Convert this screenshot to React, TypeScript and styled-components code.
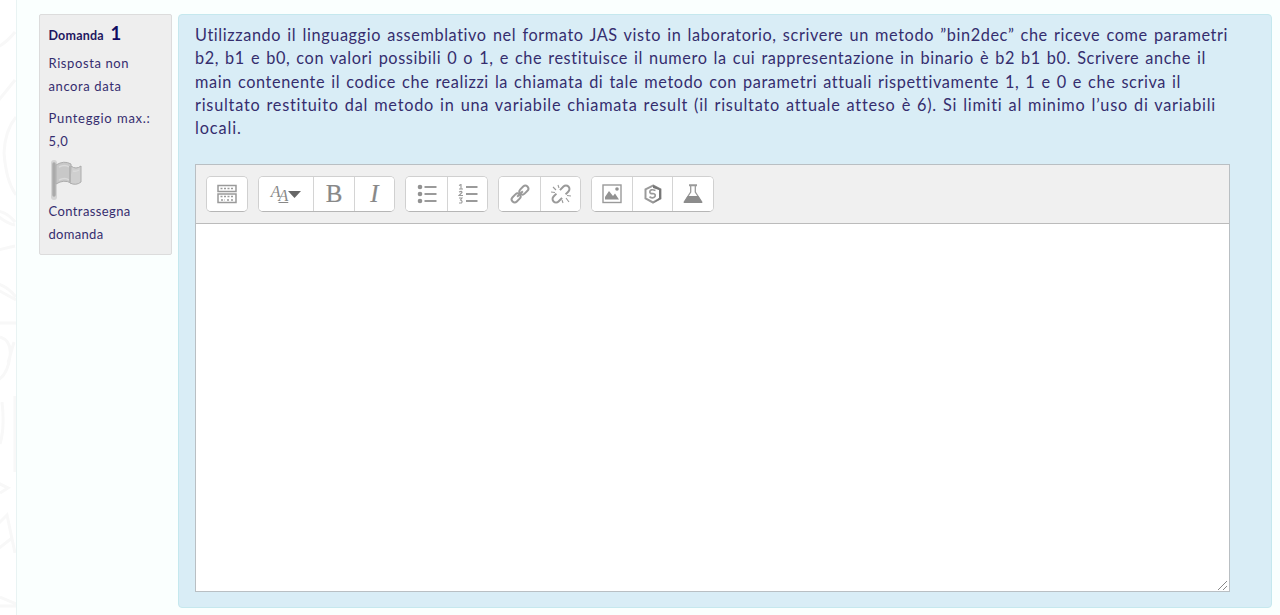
import React from 'react';
import styled, { createGlobalStyle } from 'styled-components';

const GlobalStyle = createGlobalStyle`
  * { box-sizing: border-box; }
  body { margin: 0; background: #fff; font-family: Lato, "Open Sans", sans-serif; color: #352d6e; overflow: hidden; }
  p, h3 { margin: 0; }
`;

const Page = styled.div`
  display: flex;
  height: 615px;
  overflow: hidden;
`;

const Margin = styled.aside`
  flex: 0 0 17px;
  overflow: hidden;
  border-right: 1px solid #e9f3f3;
`;

const Content = styled.main`
  flex: 1;
  display: flex;
  align-items: flex-start;
  gap: 6px;
  padding: 14px 8px 0 22px;
  background: #fafffe;
`;

const InfoBox = styled.section`
  flex: 0 0 133px;
  height: 241px;
  padding: 7px 8px 0 8.5px;
  background: #eee;
  border: 1px solid #dcdcdc;
  border-radius: 2px;
  font-size: 13px;
  line-height: 23.3px;
`;

const Title = styled.h3`
  display: flex;
  align-items: baseline;
  gap: 7px;
  height: 24px;
  font-size: 12.5px;
  line-height: 22px;
  color: #1f1760;
`;

const Number = styled.span`
  font-size: 18.5px;
  color: #100b60;
`;

const InfoText = styled.p<{ $top?: number }>`
  margin-top: ${(p) => p.$top ?? 0}px;
`;

const Line = styled.span<{ $width: number; $spacing?: number }>`
  display: block;
  width: ${(p) => p.$width}px;
  white-space: nowrap;
  text-align-last: justify;
  letter-spacing: ${(p) => p.$spacing ?? 0.6}px;
`;

const Flag = styled.svg`
  display: block;
  width: 36px;
  height: 40px;
  margin: 7px 0 0 1px;
`;

const Question = styled.section`
  flex: 1;
  height: 594px;
  padding: 8px 17px 0 16px;
  background: #d9edf6;
  border: 1px solid #c5e8ee;
  border-radius: 4px;
`;

const Prompt = styled.p`
  height: 117px;
  font-size: 16.3px;
  line-height: 23.3px;
`;

const Editor = styled.div`
  display: flex;
  flex-direction: column;
  width: 1035px;
  height: 428px;
  margin-top: 24px;
  border: 1px solid #b9bfc3;
  background: #fff;
`;

const Toolbar = styled.div`
  display: flex;
  align-items: flex-start;
  gap: 10px;
  height: 59px;
  padding: 11px 10px;
  background: #f0f0f0;
  border-bottom: 1px solid #bbb;
`;

const Group = styled.div`
  display: flex;
  height: 36px;
  background: #fff;
  border: 1px solid #d0d0d0;
  border-bottom-color: #b6b6b6;
  border-radius: 5px;
  overflow: hidden;
`;

const Tool = styled.button<{ $width?: number }>`
  display: flex;
  align-items: center;
  justify-content: center;
  width: ${(p) => p.$width ?? 41}px;
  height: 34px;
  padding: 0;
  border: 0;
  background: #fff;
  & + & { border-left: 1px solid #d4d4d4; }
`;

const Glyph = styled.span<{ $italic?: boolean }>`
  font: ${(p) => (p.$italic ? 'italic' : 'normal')} 25px/32px "Liberation Serif", serif;
  color: #888;
  -webkit-text-stroke: 0.2px #888;
`;

const FontMark = styled.span`
  display: flex;
  align-items: center;
  font: italic 16px/18px "Liberation Serif", serif;
  color: #888;
`;

const Small = styled.span<{ $down?: boolean }>`
  margin-top: ${(p) => (p.$down ? 4 : -4)}px;
  margin-left: ${(p) => (p.$down ? -2 : 0)}px;
  text-decoration: ${(p) => (p.$down ? 'underline' : 'none')};
`;

const Area = styled.div`
  flex: 1;
  display: flex;
  align-items: flex-end;
  justify-content: flex-end;
`;

const Icon = ({ children }: { children: React.ReactNode }) => (
  <svg width="20" height="20" viewBox="0 0 20 20" fill="none" stroke="#9a9a9a" strokeWidth="1.5">{children}</svg>
);

const Doodles = () => (
  <svg width="16" height="615" fill="none" stroke="#f8f8f8" strokeWidth="3">
    <path d="M-2 47Q7 42 15 32M-2 101L15 80M16 117Q5 130 4 153Q6 181 16 195M-2 211Q8 213 15 222M-2 216Q8 224 15 225M-2 250L15 246M-2 284Q7 286 16 297M-2 290L16 300M0 323H16M0 337Q12 341 10 356Q8 374 -2 380M14 342L8 363M2 402Q5 428 0 444M15 396V472M-2 483L8 488L0 493M-2 524L7 515L15 553M-2 549L12 538M0 597L16 604M0 606H16" />
  </svg>
);

const App = () => (
  <>
    <GlobalStyle />
    <Page>
      <Margin><Doodles /></Margin>
      <Content>
        <InfoBox>
          <Title><Line $width={55} $spacing={0.2}>Domanda</Line><Number>1</Number></Title>
          <InfoText $top={6}>
            <Line $width={78}>Risposta non</Line>
            <Line $width={73}>ancora data</Line>
          </InfoText>
          <InfoText $top={8}>
            <Line $width={102} $spacing={0.7}>Punteggio max.:</Line>
            <Line $width={22}>5,0</Line>
          </InfoText>
          <Flag viewBox="0 0 36 40">
            <path d="M4 3V37" stroke="#d4d4d4" strokeWidth="6" strokeLinecap="round" />
            <path d="M4 4V35" stroke="#aaa" strokeWidth="3.4" strokeLinecap="round" />
            <path d="M6 5Q14 0 21 4V23Q14 19 6 24Z" fill="#c8c8c8" stroke="#adadad" />
            <path d="M21 6Q26 10 31 6V22Q26 26 20 23Z" fill="#cfcfcf" stroke="#acacac" />
            <path d="M9 7Q15 4 19 7M9 20Q15 17 19 20M23 11Q26 12 29 10" stroke="#dadada" strokeWidth="1.5" fill="none" />
            <path d="M20 6V22" stroke="#b4b4b4" strokeWidth="2" />
          </Flag>
          <InfoText>
            <Line $width={82} $spacing={0.4}>Contrassegna</Line>
            <Line $width={55} $spacing={0.3}>domanda</Line>
          </InfoText>
        </InfoBox>
        <Question>
          <Prompt>
            <Line $width={1033}>Utilizzando il linguaggio assemblativo nel formato JAS visto in laboratorio, scrivere un metodo ”bin2dec” che riceve come parametri</Line>
            <Line $width={1011}>b2, b1 e b0, con valori possibili 0 o 1, e che restituisce il numero la cui rappresentazione in binario è b2 b1 b0. Scrivere anche il</Line>
            <Line $width={986}>main contenente il codice che realizzi la chiamata di tale metodo con parametri attuali rispettivamente 1, 1 e 0 e che scriva il</Line>
            <Line $width={1021} $spacing={0.75}>risultato restituito dal metodo in una variabile chiamata result (il risultato attuale atteso è 6). Si limiti al minimo l’uso di variabili</Line>
            <Line $width={49} $spacing={0.9}>locali.</Line>
          </Prompt>
          <Editor>
            <Toolbar>
              <Group>
                <Tool $width={40}>
                  <Icon>
                    <path d="M1 1.5H19V7.5H1ZM1 10H19V18.5H1Z" />
                    <path d="M3.5 4.5H17M3.5 12.5H17M4 16H8M10 16H12M14 16H16" strokeDasharray="2 1.5" />
                  </Icon>
                </Tool>
              </Group>
              <Group>
                <Tool $width={54}>
                  <FontMark>
                    <Small>A</Small><Small $down>A</Small>
                    <svg width="13" height="8" viewBox="0 0 13 8"><path d="M0 1H13L6.5 8Z" fill="#666" /></svg>
                  </FontMark>
                </Tool>
                <Tool><Glyph>B</Glyph></Tool>
                <Tool $width={40}><Glyph $italic>I</Glyph></Tool>
              </Group>
              <Group>
                <Tool>
                  <Icon>
                    <path d="M7.5 3H19.5M7.5 10H19.5M7.5 17H19.5" strokeWidth="2" />
                    <g fill="#929292" stroke="none"><circle cx="3" cy="3" r="2.3" /><circle cx="3" cy="10" r="2.3" /><circle cx="3" cy="17" r="2.3" /></g>
                  </Icon>
                </Tool>
                <Tool $width={40}>
                  <Icon>
                    <path d="M8 3H19.5M8 10H19.5M8 17H19.5" strokeWidth="2" />
                    <path d="M1 1.5L3 .5V5M1 5H5M1 8Q4 6.5 4 8.5L1 11.5H5M1 14H4L2.5 16Q5 17 3.5 19H1" strokeWidth="1.1" />
                  </Icon>
                </Tool>
              </Group>
              <Group>
                <Tool>
                  <Icon>
                    <g transform="rotate(-45 10 10)" strokeWidth="2"><rect x="-.5" y="7" width="10" height="6" rx="3" /><rect x="10.5" y="7" width="10" height="6" rx="3" /><path d="M6 10H14" /></g>
                  </Icon>
                </Tool>
                <Tool $width={40}>
                  <Icon>
                    <g transform="rotate(-45 10 10)" strokeWidth="2"><path d="M7 6.5H3A3.5 3.5 0 0 0 3 13.5H8M12 6.5H17A3.5 3.5 0 0 1 17 13.5H13" /></g>
                    <path d="M7 1L8 4M2 3L5 6M0 8L4 8.5M12 19L11 16M18 18L15 14M20 12L16 11.5" strokeWidth="1.1" />
                  </Icon>
                </Tool>
              </Group>
              <Group>
                <Tool $width={40}>
                  <Icon>
                    <rect x="1" y="1" width="18" height="17.5" strokeWidth="1.4" />
                    <path d="M3 15.5V13L7 7L11 12L13 9.5L17 15.5Z" fill="#929292" stroke="none" />
                    <circle cx="15" cy="5" r="1.8" fill="#929292" stroke="none" />
                  </Icon>
                </Tool>
                <Tool $width={40}>
                  <Icon>
                    <path d="M10 1.5L17.5 5.3V14.5L10 18.5L2.5 14.5V5.3Z" strokeWidth="2" />
                    <path d="M10 1V4L16 6V14L10 19L18 15V5Z" fill="#777" stroke="none" />
                    <path d="M12.5 6.5Q7 4.5 6.8 8Q7 10 10 9.5Q13 10 12 12.5Q10 15 6.5 12.8" strokeWidth="1.7" />
                  </Icon>
                </Tool>
                <Tool>
                  <Icon>
                    <path d="M6 1.2H14" strokeWidth="2" />
                    <path d="M7.7 2V8L1.5 17.5H18.5L12.3 8V2" strokeWidth="1.3" />
                    <path d="M4.6 12H15.4L19.5 19H.5Z" fill="#8c8c8c" stroke="none" />
                  </Icon>
                </Tool>
              </Group>
            </Toolbar>
            <Area>
              <svg width="12" height="12" stroke="#888" strokeWidth="1"><path d="M1 11L10 2M6 11L10 7" /></svg>
            </Area>
          </Editor>
        </Question>
      </Content>
    </Page>
  </>
);

export default App;
